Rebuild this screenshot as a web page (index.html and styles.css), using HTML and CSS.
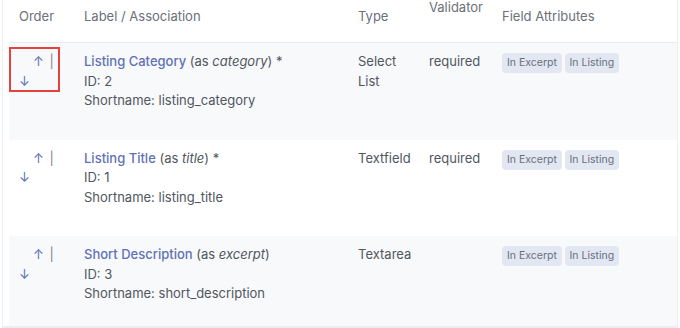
FILE: index.html
```html
<!DOCTYPE html>
<html lang="en">
<head>
  <meta charset="UTF-8">
  <title>Fields</title>
  <link rel="stylesheet" href="styles.css">
</head>
<body>
  <div class="fields-wrap">
    <table class="fields-table">
      <colgroup>
        <col class="col-order">
        <col class="col-label">
        <col class="col-type">
        <col class="col-validator">
        <col class="col-attrs">
      </colgroup>
      <thead>
        <tr>
          <th>Order</th>
          <th>Label / Association</th>
          <th>Type</th>
          <th class="th-validator">Validator</th>
          <th>Field Attributes</th>
        </tr>
      </thead>
      <tbody>
        <tr class="alt">
          <td class="order-cell">
            <span class="order-up"><a href="#">↑</a> <span class="sep">|</span></span>
            <span class="order-down"><a href="#">↓</a></span>
            <span class="highlight-box"></span>
          </td>
          <td>
            <a href="#" class="field-name">Listing Category</a> (as <em>category</em>) *<br>
            ID: 2<br>
            Shortname: listing_category
          </td>
          <td>Select List</td>
          <td>required</td>
          <td><span class="badge">In Excerpt</span> <span class="badge">In Listing</span></td>
        </tr>
        <tr>
          <td class="order-cell">
            <span class="order-up"><a href="#">↑</a> <span class="sep">|</span></span>
            <span class="order-down"><a href="#">↓</a></span>
          </td>
          <td>
            <a href="#" class="field-name">Listing Title</a> (as <em>title</em>) *<br>
            ID: 1<br>
            Shortname: listing_title
          </td>
          <td>Textfield</td>
          <td>required</td>
          <td><span class="badge">In Excerpt</span> <span class="badge">In Listing</span></td>
        </tr>
        <tr class="alt">
          <td class="order-cell">
            <span class="order-up"><a href="#">↑</a> <span class="sep">|</span></span>
            <span class="order-down"><a href="#">↓</a></span>
          </td>
          <td>
            <a href="#" class="field-name">Short Description</a> (as <em>excerpt</em>)<br>
            ID: 3<br>
            Shortname: short_description
          </td>
          <td>Textarea</td>
          <td></td>
          <td><span class="badge">In Excerpt</span> <span class="badge">In Listing</span></td>
        </tr>
      </tbody>
    </table>
  </div>
</body>
</html>
```

FILE: styles.css
```css
body {
  margin: 0;
  background: #fff;
  font-family: Inter, 'Noto Sans', Arial, sans-serif;
  font-size: 13px;
  color: #50575e;
}
.fields-wrap {
  margin: 0 2px;
  padding-left: 6px;
  border-left: 1px solid #f0f1f4;
  border-right: 1px solid #eceef2;
  border-bottom: 2px solid #eceef2;
}
.fields-table {
  width: 100%;
  border-collapse: collapse;
  table-layout: fixed;
}
.col-order { width: 65px; }
.col-label { width: 274px; }
.col-type { width: 71px; }
.col-validator { width: 73px; }
.fields-table th {
  text-align: left;
  font-weight: 400;
  color: #6b7079;
  line-height: 20px;
  padding: 6px 10px 16px 10px;
  vertical-align: top;
  border-bottom: 1px solid #e9ebef;
  white-space: nowrap;
}
.fields-table th.th-validator {
  padding-top: 0;
  line-height: 14px;
}
.fields-table td {
  vertical-align: top;
  line-height: 19.5px;
  padding: 9px 10px 29px 10px;
}
.fields-table tr.alt td {
  background: #f8f9fb;
}
.fields-table tbody tr:last-child td {
  padding-bottom: 22px;
}
.fields-table a {
  color: #5f72b5;
  text-decoration: none;
}
.field-name {
  font-weight: 500;
}
.order-cell {
  position: relative;
}
.order-up {
  display: block;
  padding-left: 14px;
}
.order-down {
  display: block;
}
.sep {
  color: #7d838c;
  margin-left: 2px;
}
.highlight-box {
  position: absolute;
  left: 0;
  top: 4px;
  width: 47px;
  height: 41px;
  border: 2px solid #e8413c;
}
.badge {
  display: inline-block;
  background: #e2e7f1;
  color: #687080;
  font-size: 10.5px;
  line-height: 20px;
  padding: 0 5px;
  border-radius: 4px;
  margin-right: -1px;
}
```
